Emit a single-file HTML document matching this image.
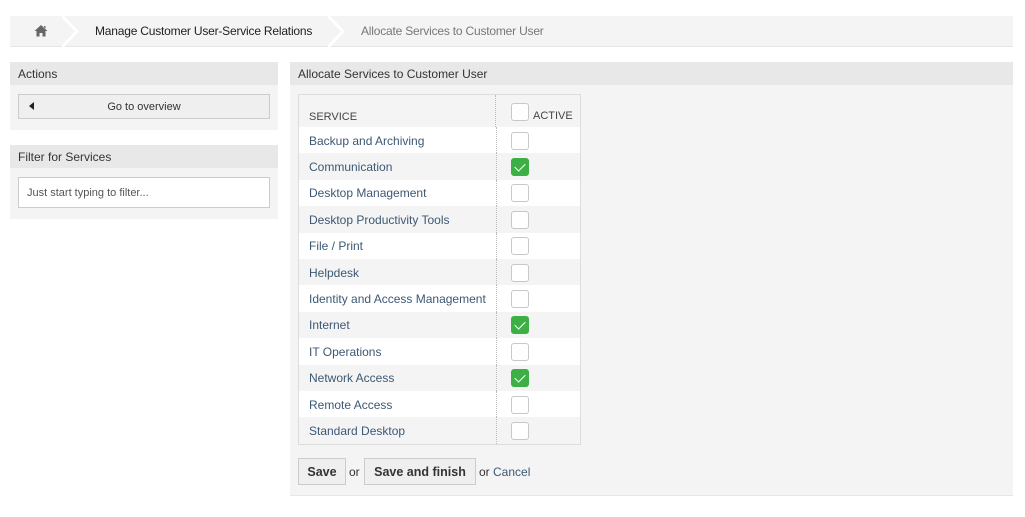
<!DOCTYPE html><html><head><style>
*{box-sizing:border-box;margin:0;padding:0}
body{width:1025px;height:517px;background:#fff;font-family:"Liberation Sans",sans-serif;font-size:12px;color:#333;position:relative;overflow:hidden}
.abs{position:absolute}
.bc{left:10px;top:16px;width:1003px;height:31px;background:#f4f4f4;border-bottom:1px solid #e6e6e6}
.hdr{background:#e8e8e8;height:23px;line-height:24px;padding-left:8px;font-size:12px;color:#333}
.box{background:#f4f4f4}
table{border-collapse:collapse;font-size:12px}
td{height:26.4px;padding-left:10px;color:#3d5874;padding-top:1px}
tr:nth-child(odd) td{background:#fff}
tr:nth-child(even) td{background:#f4f4f4}
.cb{display:inline-block;width:18px;height:18px;border:1px solid #c8c8c8;border-radius:3px;background:#fff;vertical-align:middle}
.ck{background:#3cb045;border-color:#3cb045;position:relative}
.ck:after{content:"";position:absolute;left:5px;top:2px;width:5px;height:9px;border-right:1.5px solid #fff;border-bottom:1.5px solid #fff;transform:rotate(45deg)}
.btn{position:absolute;top:458px;height:27px;border:1px solid #ccc;background:#efefef;font-weight:bold;font-size:12.5px;line-height:26px;text-align:center;color:#333}
</style></head><body>
<div class="abs bc"></div>
<svg class="abs" style="left:34px;top:24px" width="14" height="13" viewBox="0 0 14 13"><path d="M7 1L0.5 7H2.5V12.5H5.5V9H8.5V12.5H11.5V7H13.5Z M10 2H11.5V4.5L10 3.2Z" fill="#666"/></svg>
<svg class="abs" style="left:62px;top:16px" width="22" height="31"><path d="M0 0L15 15.5L0 31" fill="none" stroke="#fff" stroke-width="3"/></svg>
<div class="abs" style="left:95px;top:24px;font-size:12px;letter-spacing:-0.2px;color:#222">Manage Customer User-Service Relations</div>
<svg class="abs" style="left:328px;top:16px" width="22" height="31"><path d="M0 0L15 15.5L0 31" fill="none" stroke="#fff" stroke-width="3"/></svg>
<div class="abs" style="left:361px;top:24px;font-size:12px;letter-spacing:-0.2px;color:#777">Allocate Services to Customer User</div>

<div class="abs box" style="left:10px;top:62px;width:268px;height:68px"><div class="hdr">Actions</div></div>
<div class="abs" style="left:18px;top:94px;width:252px;height:25px;border:1px solid #ccc;background:#efefef;text-align:center;line-height:24px;font-size:11px">Go to overview</div>
<div class="abs" style="left:29px;top:102px;width:0;height:0;border-top:4px solid transparent;border-bottom:4px solid transparent;border-right:5px solid #222"></div>
<div class="abs box" style="left:10px;top:145px;width:268px;height:74px"><div class="hdr">Filter for Services</div></div>
<div class="abs" style="left:18px;top:177px;width:252px;height:31px;border:1px solid #ccc;background:#fff;padding-left:8px;line-height:31px;font-size:11px;color:#555">Just start typing to filter...</div>

<div class="abs box" style="left:290px;top:62px;width:723px;height:434px;border-bottom:1px solid #e6e6e6"><div class="hdr">Allocate Services to Customer User</div></div>
<div class="abs" style="left:298px;top:94px;width:283px;border:1px solid #ddd;background:#fff">
<div style="height:32px;background:#f4f4f4;position:relative;font-size:11px;color:#444">
<span class="abs" style="left:10px;top:16px">SERVICE</span>
<span class="abs" style="left:196px;top:0;height:32px;border-left:1px dotted #bbb"></span>
<span class="cb abs" style="left:212px;top:8px"></span>
<span class="abs" style="left:234px;top:15px">ACTIVE</span></div>
<table style="width:281px">
<tr><td style="width:197px;border-right:1px dotted #bbb">Backup and Archiving</td><td style="padding-left:14px"><span class="cb"></span></td></tr>
<tr><td style="border-right:1px dotted #bbb">Communication</td><td style="padding-left:14px"><span class="cb ck"></span></td></tr>
<tr><td style="border-right:1px dotted #bbb">Desktop Management</td><td style="padding-left:14px"><span class="cb"></span></td></tr>
<tr><td style="border-right:1px dotted #bbb">Desktop Productivity Tools</td><td style="padding-left:14px"><span class="cb"></span></td></tr>
<tr><td style="border-right:1px dotted #bbb">File / Print</td><td style="padding-left:14px"><span class="cb"></span></td></tr>
<tr><td style="border-right:1px dotted #bbb">Helpdesk</td><td style="padding-left:14px"><span class="cb"></span></td></tr>
<tr><td style="border-right:1px dotted #bbb">Identity and Access Management</td><td style="padding-left:14px"><span class="cb"></span></td></tr>
<tr><td style="border-right:1px dotted #bbb">Internet</td><td style="padding-left:14px"><span class="cb ck"></span></td></tr>
<tr><td style="border-right:1px dotted #bbb">IT Operations</td><td style="padding-left:14px"><span class="cb"></span></td></tr>
<tr><td style="border-right:1px dotted #bbb">Network Access</td><td style="padding-left:14px"><span class="cb ck"></span></td></tr>
<tr><td style="border-right:1px dotted #bbb">Remote Access</td><td style="padding-left:14px"><span class="cb"></span></td></tr>
<tr><td style="border-right:1px dotted #bbb">Standard Desktop</td><td style="padding-left:14px"><span class="cb"></span></td></tr>
</table></div>
<div class="btn" style="left:298px;width:48px">Save</div>
<div class="abs" style="left:349px;top:465px">or</div>
<div class="btn" style="left:364px;width:112px">Save and finish</div>
<div class="abs" style="left:479px;top:465px">or <span style="color:#3d5874">Cancel</span></div>
</body></html>
